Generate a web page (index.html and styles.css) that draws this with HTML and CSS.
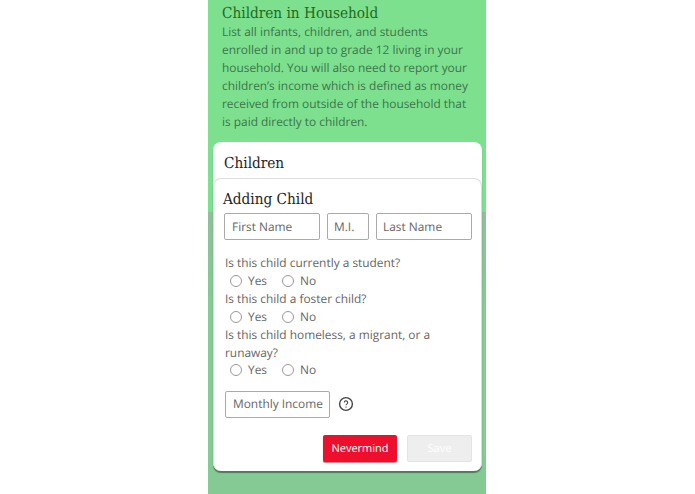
FILE: index.html
```html
<!DOCTYPE html>
<html lang="en">
<head>
<meta charset="utf-8">
<title>Children in Household</title>
<link rel="stylesheet" href="styles.css">
</head>
<body>
<main class="phone">
  <section class="intro">
    <h1>Children in Household</h1>
    <p>List all infants, children, and students enrolled in and up to grade 12 living in your household. You will also need to report your children’s income which is defined as money received from outside of the household that is paid directly to children.</p>
  </section>
  <section class="card">
    <h2>Children</h2>
    <form class="panel">
      <h3>Adding Child</h3>
      <div class="names">
        <span class="field first">First Name</span>
        <span class="field mi">M.I.</span>
        <span class="field last">Last Name</span>
      </div>
      <div class="questions">
        <p class="q">Is this child currently a student?</p>
        <div class="radios"><span class="radio"></span><span class="opt">Yes</span><span class="radio"></span><span class="opt">No</span></div>
        <p class="q">Is this child a foster child?</p>
        <div class="radios"><span class="radio"></span><span class="opt">Yes</span><span class="radio"></span><span class="opt">No</span></div>
        <p class="q">Is this child homeless, a migrant, or a runaway?</p>
        <div class="radios"><span class="radio"></span><span class="opt">Yes</span><span class="radio"></span><span class="opt">No</span></div>
      </div>
      <div class="income">
        <span class="field money">Monthly Income</span>
        <svg class="help" width="16" height="16" viewBox="0 0 16 16" aria-hidden="true"><circle cx="8" cy="8" r="6.4" fill="none" stroke="#444" stroke-width="1.4"/><path d="M6.3 6.5a1.7 1.7 0 1 1 2.7 1.4c-.7.5-1 .8-1 1.4" fill="none" stroke="#444" stroke-width="1.1"/><circle cx="8" cy="11.1" r=".7" fill="#444"/></svg>
      </div>
      <div class="actions">
        <span class="btn cancel">Nevermind</span>
        <span class="btn save">Save</span>
      </div>
    </form>
  </section>
</main>
</body>
</html>
```
FILE: styles.css
```css
* { box-sizing: border-box; }
html, body { margin: 0; height: 100%; background: #fff; }
body { display: flex; justify-content: center; overflow: hidden; font-family: "Open Sans", sans-serif; color: #555; text-rendering: geometricPrecision; }
.phone { width: 278px; height: 494px; margin-left: -1px; background: linear-gradient(#7ce08f 212px, #90bf9c 212px, #85c994 300px); overflow: hidden; }
.intro { padding: 3px 14px 0; height: 142px; }
h1 { margin: 0; font: 400 15.2px/20px "DejaVu Serif Condensed", "DejaVu Serif", serif; color: #1f6a1a; }
.intro p { margin: 0; font-size: 11.9px; line-height: 18px; color: #3d7549; }
.card { margin: 0 4px 0 5px; height: 329px; background: #fff; border-radius: 8px; box-shadow: 0 2px 1px #4d7a58; display: flex; flex-direction: column; }
h2 { margin: 0; padding: 11px 11px 0; height: 36px; font: 400 15.2px/20px "DejaVu Serif Condensed", "DejaVu Serif", serif; color: #222; flex: none; }
.panel { flex: 1; border: 1px solid #ddd; border-bottom: 0; border-radius: 8px; padding: 10px 9px 0; }
h3 { margin: 0 0 4px; font: 400 15.2px/20px "DejaVu Serif Condensed", "DejaVu Serif", serif; color: #222; }
.names { display: flex; gap: 7px; margin-left: 1px; }
.field { display: flex; align-items: center; height: 27px; border: 1px solid #aaa; border-radius: 2px; font-size: 11.9px; color: #666; padding-left: 7px; background: #fff; }
.first, .last { width: 96px; }
.last { padding-left: 6px; }
.mi { width: 42px; padding-left: 6px; }
.questions { margin: 14px 0 0 2px; }
.q { margin: 0; font-size: 11.9px; line-height: 18px; color: #666; width: 222px; }
.radios { display: flex; align-items: center; height: 17.8px; font-size: 11.9px; color: #666; padding-left: 5px; }
.radio { width: 12px; height: 12px; border: 1px solid #999; border-radius: 50%; margin-right: 6px; }
.opt { width: 34px; }
.income { display: flex; align-items: center; gap: 8px; margin: 11.6px 0 0 2px; }
.money { width: 105px; padding-left: 7px; white-space: nowrap; }
.actions { display: flex; justify-content: flex-end; gap: 10px; margin-top: 17px; }
.btn { display: flex; align-items: center; justify-content: center; height: 27px; border-radius: 2px; font-size: 11px; }
.cancel { width: 74px; background: #ee0f2c; color: #fff; box-shadow: 0 1px 1px #b5808a; }
.save { width: 65px; background: #eee; color: #fff; border: 1px solid #e4e4e4; }
```
